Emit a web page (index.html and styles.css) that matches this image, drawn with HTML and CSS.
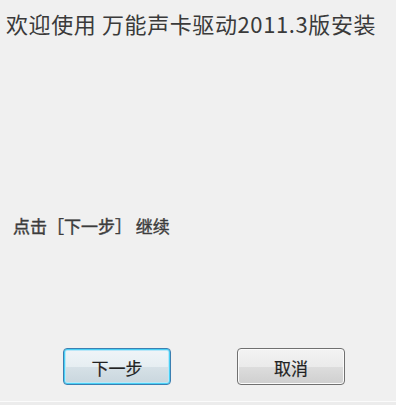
FILE: index.html
```html
<!DOCTYPE html>
<html lang="zh-CN">
<head>
<meta charset="utf-8">
<title>万能声卡驱动2011.3版安装</title>
<link rel="stylesheet" href="styles.css">
</head>
<body>
<div class="page">
  <h1 class="title">欢迎使用 万能声卡驱动2011.3版安装</h1>
  <p class="prompt">点击［下一步］ 继续</p>
  <div class="actions">
    <button class="btn btn-default" type="button">下一步</button>
    <button class="btn" type="button">取消</button>
  </div>
  <div class="footer"></div>
</div>
</body>
</html>
```

FILE: styles.css
```css
html, body {
  margin: 0;
  padding: 0;
  background: #f0f0f0;
}

.page {
  width: 396px;
  height: 405px;
  display: flex;
  flex-direction: column;
  background: #f0f0f0;
  font-family: "Noto Sans CJK SC", "Noto Sans", sans-serif;
  color: #333333;
  overflow: hidden;
}

.title {
  margin: 0;
  padding: 8px 0 0 6px;
  font-size: 22px;
  font-weight: 400;
  line-height: 30px;
  letter-spacing: 0.6px;
  color: #3a3a3a;
  white-space: nowrap;
}

.prompt {
  margin: 176px 0 0 0;
  padding-left: 13px;
  font-size: 17px;
  font-weight: 400;
  -webkit-text-stroke: 0.4px #3c3c3c;
  line-height: 24px;
  color: #3c3c3c;
  white-space: pre;
}

.actions {
  display: flex;
  gap: 66px;
  margin-top: 110px;
  padding-left: 63px;
}

.btn {
  box-sizing: border-box;
  width: 108px;
  height: 37px;
  padding: 2px 0 0 0;
  border: 1px solid #707070;
  border-radius: 4px;
  background: linear-gradient(to bottom, #f3f3f3 0%, #ebebeb 50%, #dddddd 51%, #cfcfcf 100%);
  box-shadow: inset 0 0 0 1px #fbfbfb;
  font-family: "Noto Sans CJK SC", "Noto Sans", sans-serif;
  font-size: 17px;
  line-height: 24px;
  color: #222222;
  -webkit-text-stroke: 0.2px #222222;
}

.btn-default {
  border: 1px solid #3c7fb1;
  box-shadow: inset 0 0 0 1px #48d0f5, inset 0 0 0 2px #b9e7f8;
  background: linear-gradient(to bottom, #f0f5f8 0%, #e6eef2 50%, #d6e1e7 51%, #c9d6dd 100%);
}

.footer {
  margin-top: auto;
  height: 3px;
  border-top: 1px solid #fbfbfb;
  background: #ececec;
}
```
